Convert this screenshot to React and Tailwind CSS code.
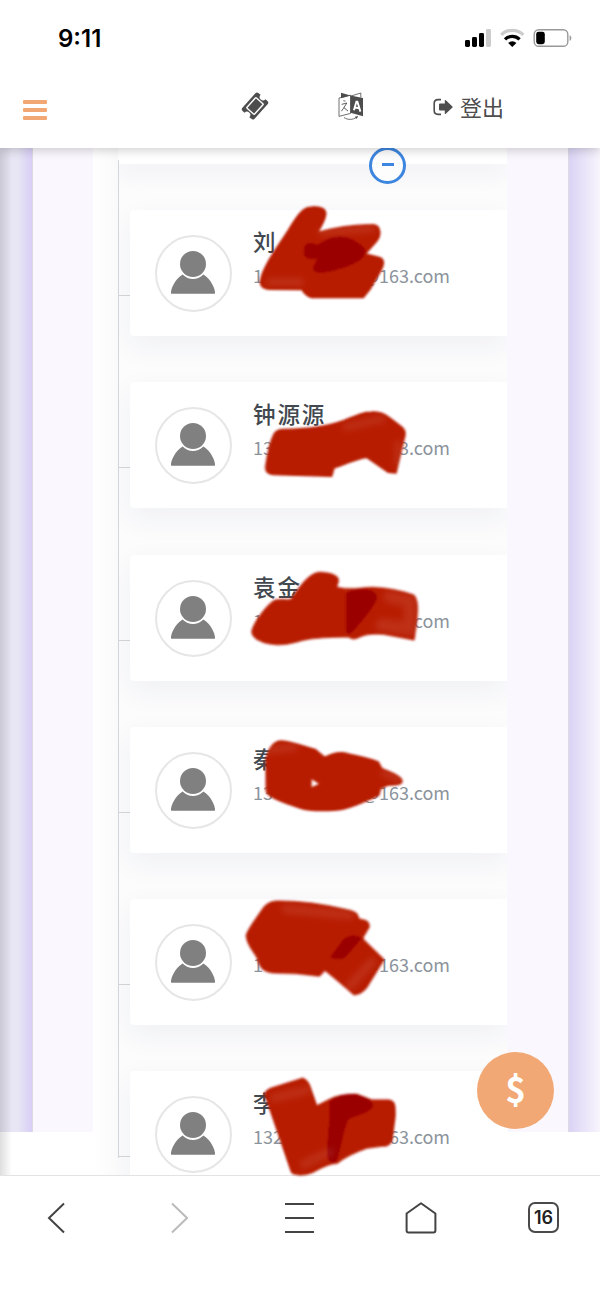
// only the readable parts of each contact, the rest is covered by the marker
const members = [
  { id: 1, name: '刘', start: '1', end: '@163.com' },
  { id: 2, name: '钟源源', start: '13', end: '3.com' },
  { id: 3, name: '袁金', start: '1', end: '@163.com' },
  { id: 4, name: '秦', start: '13', end: '@163.com' },
  { id: 5, name: '', start: '1', end: '@163.com' },
  { id: 6, name: '李', start: '1322', end: '63.com' }
];

const StatusBar = () => (
  <div className="h-[76px] pl-[58px] pr-[28px] flex items-center justify-between text-black">
    <span className="mt-px font-['Inter'] text-[24px] font-semibold leading-none">9:11</span>
    <svg width="108" height="22" viewBox="464 27 108 22">
      <rect x="465" y="40" width="5" height="7" rx="1.4" />
      <rect x="472" y="37" width="5" height="10" rx="1.4" />
      <rect x="479" y="33" width="5" height="14" rx="1.4" />
      <rect x="486" y="29" width="5" height="18" rx="1.4" fill="#ccc" />
      <g fill="none" strokeWidth="3.2">
        <path d="M501.2 34.8a16 16 0 0 1 22.2 0" stroke="#ccc" />
        <path d="M505 39.4a10.5 10.5 0 0 1 14.6 0" stroke="#000" />
      </g>
      <path d="M508.2 42.9a6 6 0 0 1 8.2 0l-4.1 4z" />
      <rect x="534.2" y="29.7" width="33.6" height="16.6" rx="4.6" fill="none" stroke="#999" strokeWidth="1.4" />
      <rect x="536.2" y="31.8" width="8.6" height="12.4" rx="2.4" />
      <path d="M569.6 35.2c2.3.8 2.3 4.8 0 5.6z" fill="#999" />
    </svg>
  </div>
);

const TicketIcon = () => (
  <svg width="28" height="28" viewBox="0 0 28 28">
    <g transform="rotate(-48 14 14)">
      <path d="M4.3 5.8h19.4q2.3 0 2.3 2.3v2.6a3.3 3.3 0 0 0 0 6.6v2.6q0 2.3-2.3 2.3H4.3Q2 22.2 2 19.9v-2.6a3.3 3.3 0 0 0 0-6.6V8.1q0-2.3 2.3-2.3z" fill="#4d4d4d" />
      <rect x="7" y="8.9" width="14" height="10.2" rx=".8" fill="none" stroke="#fff" strokeWidth="1.4" />
    </g>
  </svg>
);

const TranslateIcon = () => (
  <svg width="26" height="29" viewBox="0 0 26 29">
    <path d="M3 .8l9.5 2.8L3 6.2z" fill="#4d4d4d" />
    <path d="M12.5 4.2L22.8 1v4.4M1 6l11.5-2.8v18.2L1 24.4z" fill="none" stroke="#4d4d4d" strokeWidth=".8" />
    <path d="M12.5 3.6L25 6v18.3l-12.5-3.5z" fill="#4d4d4d" />
    <path d="M15.9 18.2l2.5-8.4h1l3 9.8M16.9 15.5l4.4.8" fill="none" stroke="#fff" strokeWidth="1.9" />
    <path d="M5.4 8.6l2 .6M3.6 12.4l5.2-1.4-3.2 5.2-2.2 3M5.8 15.6l4.2 3.4" fill="none" stroke="#4d4d4d" strokeWidth=".9" />
    <path d="M6 25.5c4 2.8 9 2.3 12.5-.2" fill="none" stroke="#4d4d4d" strokeWidth=".8" />
    <path d="M16.8 24.8l3.4-.9-1.5 3z" fill="#4d4d4d" />
  </svg>
);

const Navbar = () => (
  <div className="h-[72px] flex items-start text-[#4d4d4d]">
    <button className="ml-[23px] mt-6 w-6 flex flex-col gap-1">
      <span className="h-1 rounded-[1px] bg-[#f1a875]" />
      <span className="h-1 rounded-[1px] bg-[#f1a875]" />
      <span className="h-1 rounded-[1px] bg-[#f1a875]" />
    </button>
    <div className="ml-[194px] mt-4">
      <TicketIcon />
    </div>
    <div className="ml-[69px] mt-4">
      <TranslateIcon />
    </div>
    <button className="ml-[69px] mt-[14px] flex items-center">
      <svg width="20" height="18" viewBox="0 0 20 18" className="mt-0.5">
        <path d="M8 1.6H5Q1.2 1.6 1.2 5.4v7.2q0 3.8 3.8 3.8h3" fill="none" stroke="currentColor" strokeWidth="1.6" />
        <path d="M6 6.4q0-1 1-1h4.8V2.6q0-1.2 1-.4l6.4 6q.9.8 0 1.6l-6.4 6q-1 .8-1-.4v-2.8H7q-1 0-1-1z" fill="currentColor" />
      </svg>
      <span className="ml-[7px] font-['Noto_Sans_CJK_SC',sans-serif] text-[22px] leading-8">登出</span>
    </button>
  </div>
);

const MemberCard = ({ member }) => (
  <div className="flex h-[126px] mb-[46.3px]">
    {/* Branch */}
    <div className="w-[11px] h-[86px] shrink-0 border-b-[1.5px] border-[#d3d7da]" />
    <div className="flex-1 bg-white rounded-l-[4px] pl-[25px] pt-[25px] flex items-start shadow-[0_10px_30px_rgba(40,45,80,0.06)]">
      <div className="size-[77px] shrink-0 rounded-full border-2 border-[#e6e6e6] flex justify-center">
        <svg width="46" height="46" viewBox="0 0 46 46" className="mt-3 -ml-px">
          <path d="M1.6 44.8C-.6 44.8 3 31 12.6 25.4 19 31.6 27 31.6 33.4 25.4 43 31 46.6 44.8 44.4 44.8z" fill="#808080" />
          <circle cx="23" cy="15" r="13" fill="#808080" />
        </svg>
      </div>
      <div className="ml-[21px] w-[197px] mt-[-11px] font-['Noto_Sans_CJK_SC',sans-serif]">
        <p className="h-[34px] text-[22.5px] leading-[34px] tracking-[1.9px] font-medium text-[#42484f] whitespace-nowrap">{member.name}</p>
        <p className="flex justify-between text-[18px] leading-[34px] text-[#8b939c]">
          <span>{member.start}</span>
          <span>{member.end}</span>
        </p>
      </div>
    </div>
  </div>
);

// Marker strokes drawn freehand over the list
const MarkerStrokes = () => (
  <svg width="600" height="1298" viewBox="0 0 600 1298" className="absolute left-0 top-0 pointer-events-none">
    <defs>
      <filter id="soft" x="-5%" y="-5%" width="110%" height="110%">
        <feGaussianBlur stdDeviation="1.1" />
      </filter>
      <filter id="fade" x="-20%" y="-20%" width="140%" height="140%">
        <feGaussianBlur stdDeviation="3" />
      </filter>
    </defs>
    <g fill="#b81c03" strokeLinejoin="round" filter="url(#soft)">
      <g transform="translate(230 190) scale(.33333)">
        <path d="M92 270C98 230 140 175 175 120 205 70 220 52 245 51 275 48 290 58 287 75 284 95 272 110 264 127 320 112 350 106 430 104 455 106 454 140 438 156L406 192 440 200C465 204 464 220 454 240L420 298 400 323H245Q225 316 216 299L120 298Q86 295 92 270z" stroke="#b81c03" strokeWidth="4" />
        <path d="M222 195C218 165 230 150 262 165 290 145 325 134 350 142 375 150 390 160 406 178 410 195 395 215 350 230 310 243 275 253 255 245 240 235 258 217 262 206 245 210 230 207 222 195z" fill="#9b0000" />
      </g>
      <g transform="translate(230 370) scale(.33333)">
        <path d="M107 290C112 255 122 210 132 192Q140 178 160 178C230 178 290 170 340 152 380 135 400 126 425 126 450 124 465 132 485 148 515 170 527 176 525 195L498 309 475 307 410 262C370 270 340 285 312 294L305 319 130 314Q105 310 107 290z" stroke="#b81c03" strokeWidth="4" />
      </g>
      <g transform="translate(230 550) scale(.33333)">
        <path d="M66 244C70 220 110 165 135 151 160 145 175 153 184 148 205 115 235 72 265 68 290 65 325 75 325 92L319 112C370 124 380 112 430 113 470 115 520 125 550 135 565 150 563 180 560 210L552 269 460 252Q410 248 390 260 370 272 355 260C290 262 240 262 200 275 165 285 120 288 90 272 75 265 66 255 66 244z" stroke="#b81c03" strokeWidth="4" />
        <path d="M348 130Q360 118 390 118C420 115 442 125 441 145 430 175 390 220 372 240Q360 258 348 246z" fill="#9b0000" />
      </g>
      <g transform="translate(230 720) scale(.33333)">
        <path fillRule="evenodd" d="M108 120C112 90 130 62 155 63 180 65 220 78 255 88L284 112C305 100 320 96 340 98 380 108 415 112 445 126L455 145C480 157 510 165 515 180 520 192 505 196 475 195L452 205 446 226C400 245 360 268 320 270 270 274 235 272 210 264 170 252 110 230 109 214zM243 174V204L270 192z" stroke="#b81c03" strokeWidth="4" />
      </g>
      <g transform="translate(230 885) scale(.33333)">
        <path d="M49 150C58 125 80 100 98 72Q115 49 140 49C210 48 270 56 350 74 380 80 385 90 386 102 405 104 420 110 417 126L398 158 402 166 461 224 412 304C400 320 385 328 372 329L325 288 285 255 268 273 200 265 130 263C92 260 90 240 80 215 68 195 48 175 49 150z" stroke="#b81c03" strokeWidth="4" />
        <path d="M300 218L340 163Q365 143 396 159L345 218Q330 226 300 218z" fill="#9b0000" />
      </g>
      <g transform="translate(230 1040) scale(.33333)">
        <path d="M104 162Q108 150 125 144L218 115Q232 120 240 140L260 198 300 178Q330 162 380 163L425 180 475 180C495 182 496 195 495 230L486 300Q480 320 455 318L410 324C370 338 345 350 320 370 300 368 270 385 245 398 220 408 190 406 184 395L150 295z" stroke="#b81c03" strokeWidth="4" />
        <path d="M298 185Q320 164 360 163C385 160 430 180 430 198 420 220 380 225 355 238 340 270 335 320 320 362 310 373 297 366 292 350 290 290 302 240 298 185z" fill="#9b0000" />
      </g>
    </g>
    {/* thinner paint near the stroke ends */}
    <g fill="none" stroke="#fff" strokeOpacity=".09" strokeLinecap="round" filter="url(#fade)">
      <path d="M270 282l30 0M322 232l50-4" strokeWidth="8" />
      <path d="M346 427l36-8M398 444l0 20" strokeWidth="7" />
      <path d="M390 597l20 4v28l-28-4" strokeWidth="13" />
      <path d="M385 773l14 6M270 750l24-3" strokeWidth="8" />
      <path d="M286 909l64 6M350 986l22-24" strokeWidth="9" />
      <path d="M274 1098l34 -8M304 1164l26 -12" strokeWidth="8" />
    </g>
  </svg>
);

const BottomBar = () => (
  <div className="h-[123px] border-t border-[#e3e3e3] bg-white flex items-start justify-between pl-[47px] pr-[41px] pt-[26px] text-[#434343]">
    <svg width="20" height="32" viewBox="0 0 20 32" fill="none" stroke="currentColor" strokeWidth="2">
      <path d="M17 1.5L2 16l15 14.5" />
    </svg>
    <svg width="20" height="32" viewBox="0 0 20 32" fill="none" stroke="#bbb" strokeWidth="2" className="ml-[36px]">
      <path d="M4 1.5L19 16 4 30.5" />
    </svg>
    <svg width="30" height="32" viewBox="0 0 30 32" fill="none" stroke="currentColor" strokeWidth="2" className="ml-[32px]">
      <path d="M0 2h29M0 16h29M0 30h29" />
    </svg>
    <svg width="32" height="32" viewBox="0 0 32 32" fill="none" stroke="currentColor" strokeWidth="2" strokeLinejoin="round" className="ml-[26px]">
      <path d="M16 1.2L30.4 11.5V28.5Q30.4 30.4 28.5 30.4H3.5Q1.6 30.4 1.6 28.5V11.5z" />
    </svg>
    <div className="ml-[26px] size-[31px] rounded-[7px] border-2 border-[#4a4a4a] flex items-center justify-center font-['Inter'] text-[18px] font-semibold leading-none text-[#222]">
      16
    </div>
  </div>
);

const App = () => {
  return (
    <div className="relative w-[600px] h-[1298px] overflow-hidden bg-white">
      {/* Header */}
      <div className="relative z-10 bg-white shadow-[0_2px_10px_rgba(0,0,0,0.2)]">
        <StatusBar />
        <Navbar />
      </div>

      {/* Team tree */}
      <div className="relative h-[1027px] overflow-hidden flex items-start">
        <div className="w-[33px] h-[984px] border-r border-[#dcdae2] bg-linear-to-r from-[#e8e6f4] from-55% to-[#d9cef7]" />
        <div className="w-[60px] h-[984px] bg-[#faf8fe]" />
        <div className="w-[25px] h-[1027px] bg-linear-to-r from-white to-[#fafafa]" />
        <div className="relative w-[389px] h-[1027px] overflow-hidden bg-[#fcfcfd]">
          <div className="h-4 bg-white shadow-[0_8px_24px_rgba(40,45,80,0.07)]" />
          <div className="mt-[-4px] h-[998px] border-l-[1.5px] border-[#d0d9dd] pt-[50px]">
            {members.map(member => (
              <MemberCard key={member.id} member={member} />
            ))}
          </div>
          <div className="absolute left-[251px] top-[-1px] size-[37px] rounded-full border-[3px] border-[#3d86df] bg-[#fdfdfd] flex items-center justify-center">
            <span className="w-3 h-[3px] bg-[#3d86df] -mt-[3px]" />
          </div>
        </div>
        <div className="w-[61px] h-[984px] bg-[#faf8fe]" />
        <div className="w-[32px] h-[984px] border-l border-[#dcdae2] bg-linear-to-r from-[#dad3f5] to-[#f8f5fd]" />
        {/* Page edge shade */}
        <div className="absolute left-0 top-0 w-3 h-full bg-linear-to-r from-black/13 to-transparent" />
      </div>

      <BottomBar />
      <MarkerStrokes />

      <button className="absolute z-20 left-[477px] top-[1052px] size-[77px] pb-[7px] rounded-full bg-[#f1a875] text-white flex items-center justify-center font-['Noto_Sans_CJK_SC',sans-serif] text-[35px] font-bold leading-none">
        $
      </button>
    </div>
  );
};

export default App;
